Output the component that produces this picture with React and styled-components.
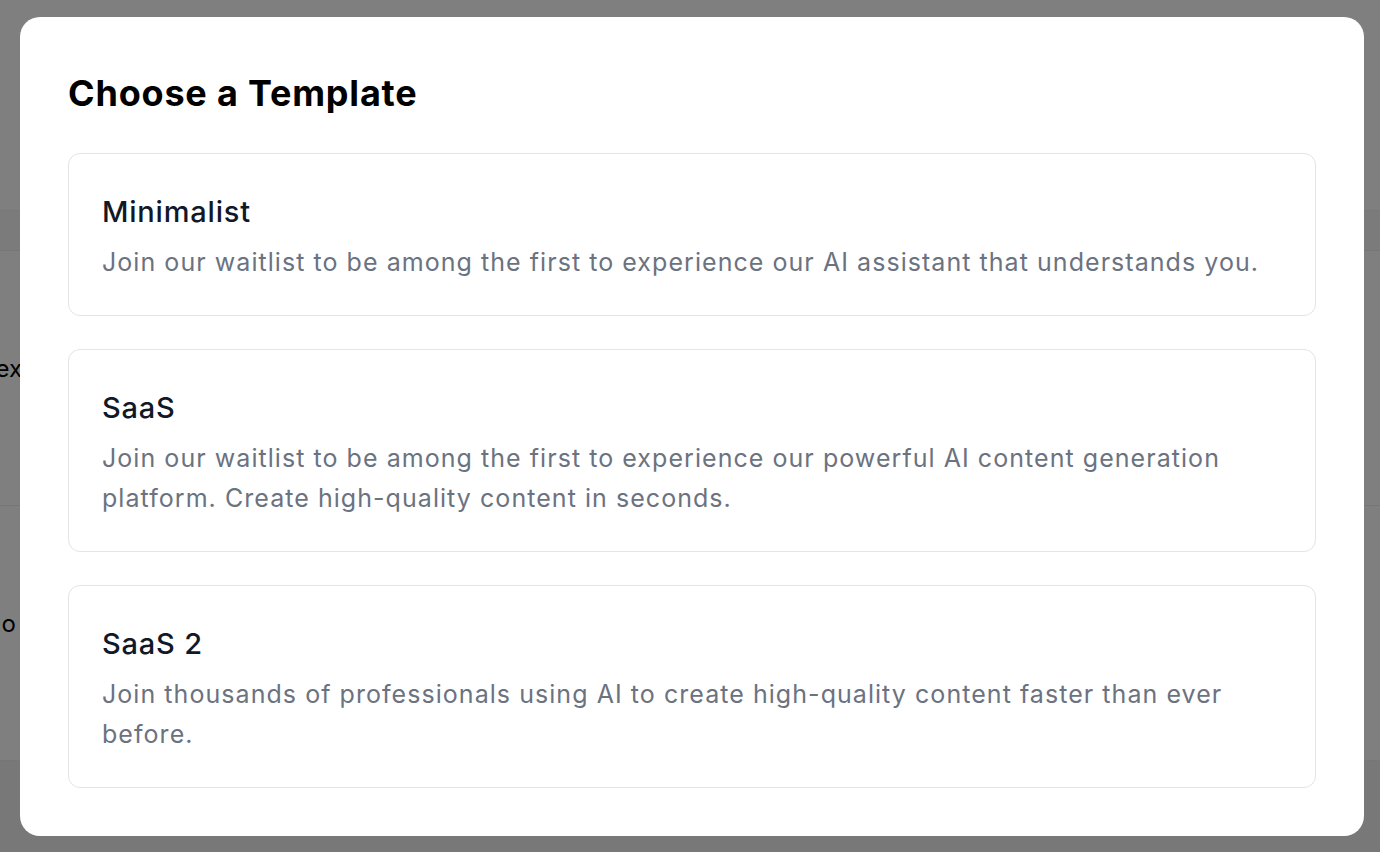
import React from 'react'
import styled, { createGlobalStyle } from 'styled-components'

const GlobalStyle = createGlobalStyle`
  html, body {
    margin: 0;
    padding: 0;
    width: 100%;
    height: 100%;
    overflow: hidden;
  }
  body {
    font-family: Inter, "Noto Sans", "Liberation Sans", sans-serif;
    background: #ffffff;
  }
`

/* page that sits behind the dialog */
const Page = styled.div`
  width: 100vw;
  height: 100vh;
  display: flex;
  flex-direction: column;
  background: #ffffff;
`

const PageHeader = styled.div`
  height: 210px;
  flex-shrink: 0;
  border-bottom: 1px solid #f0f0f0;
`

const TableHead = styled.div`
  height: 39px;
  flex-shrink: 0;
  background: #f6f6f6;
  border-bottom: 1px solid #ececec;
`

const Row = styled.div`
  height: 254px;
  flex-shrink: 0;
  display: flex;
  align-items: center;
  background: ${p => (p.$muted ? '#f0f0f0' : '#ffffff')};
  border-bottom: 1px solid #ececec;
`

const Cell = styled.div`
  width: ${p => p.$end}px;
  display: flex;
  justify-content: flex-end;
  white-space: nowrap;
  font-size: 24px;
  color: #000;
  margin-top: -20px;
`

/* dialog */
const Overlay = styled.div`
  position: fixed;
  inset: 0;
  background: rgba(0, 0, 0, 0.5);
  display: flex;
  align-items: flex-start;
  padding: 17px 16px 16px 20px;
`

const Dialog = styled.div`
  flex: 1;
  background: #ffffff;
  border-radius: 20px;
  padding: 48px;
  display: flex;
  flex-direction: column;
`

const Title = styled.h2`
  margin: 0 0 32px;
  font-size: 36px;
  line-height: 56px;
  font-weight: 700;
  color: #000;
  letter-spacing: 0.8px;
`

const List = styled.div`
  display: flex;
  flex-direction: column;
  gap: 33px;
`

const Card = styled.button`
  all: unset;
  box-sizing: border-box;
  display: block;
  width: 100%;
  border: 1px solid #e3e4e8;
  border-radius: 12px;
  padding: 40px 33px 33px;
  cursor: pointer;
  background: #ffffff;
`

const CardTitle = styled.h3`
  margin: 0 0 12px;
  font-size: 29px;
  line-height: 36px;
  font-weight: 500;
  color: #111827;
  letter-spacing: 0.8px;
`

const CardText = styled.p`
  margin: 0;
  font-size: 25px;
  line-height: 40px;
  color: #6b7280;
  letter-spacing: 1.05px;
`

const templates = [
  {
    name: 'Minimalist',
    text: 'Join our waitlist to be among the first to experience our AI assistant that understands you.',
  },
  {
    name: 'SaaS',
    text: 'Join our waitlist to be among the first to experience our powerful AI content generation platform. Create high-quality content in seconds.',
  },
  {
    name: 'SaaS 2',
    text: 'Join thousands of professionals using AI to create high-quality content faster than ever before.',
  },
]

const App = () => {
  return (
    <>
      <GlobalStyle />
      <Page>
        <PageHeader />
        <TableHead />
        <Row><Cell $end={22}>Index</Cell></Row>
        <Row><Cell $end={16}>No</Cell></Row>
        <Row $muted><Cell $end={0} /></Row>
      </Page>
      <Overlay>
        <Dialog>
          <Title>Choose a Template</Title>
          <List>
            {templates.map(t => (
              <Card key={t.name}>
                <CardTitle>{t.name}</CardTitle>
                <CardText>{t.text}</CardText>
              </Card>
            ))}
          </List>
        </Dialog>
      </Overlay>
    </>
  )
}

export default App
